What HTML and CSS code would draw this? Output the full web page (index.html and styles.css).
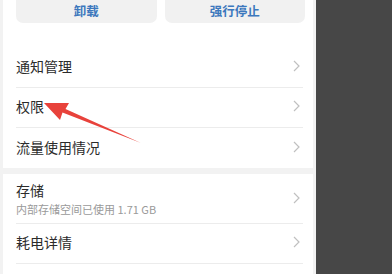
FILE: index.html
```html
<!DOCTYPE html>
<html lang="zh-CN">
<head>
  <meta charset="UTF-8">
  <title>应用信息</title>
  <link rel="stylesheet" href="styles.css">
</head>
<body>
<div class="screen">
  <div class="panel">
    <div class="card top">
      <div class="actions">
        <button class="action">卸载</button>
        <button class="action">强行停止</button>
      </div>
      <div class="row"><span class="title">通知管理</span><svg class="chev" width="7" height="12" viewBox="0 0 7 12"><polyline points="1,1 6,6 1,11"/></svg></div>
      <div class="row"><span class="title">权限</span><svg class="chev" width="7" height="12" viewBox="0 0 7 12"><polyline points="1,1 6,6 1,11"/></svg></div>
      <div class="row last"><span class="title">流量使用情况</span><svg class="chev" width="7" height="12" viewBox="0 0 7 12"><polyline points="1,1 6,6 1,11"/></svg></div>
    </div>
    <div class="card">
      <div class="row tall">
        <div>
          <div class="title">存储</div>
          <div class="sub">内部存储空间已使用 1.71 GB</div>
        </div>
        <svg class="chev" width="7" height="12" viewBox="0 0 7 12"><polyline points="1,1 6,6 1,11"/></svg>
      </div>
      <div class="row"><span class="title">耗电详情</span><svg class="chev" width="7" height="12" viewBox="0 0 7 12"><polyline points="1,1 6,6 1,11"/></svg></div>
      <div class="row"><span class="title">打开方式</span><svg class="chev" width="7" height="12" viewBox="0 0 7 12"><polyline points="1,1 6,6 1,11"/></svg></div>
    </div>
    <svg class="arrow" width="160" height="160" viewBox="0 0 160 160">
      <polygon points="44,103 69,103 65.5,109 141,143 62.5,112.5 60,120" fill="#e8423b"/>
    </svg>
  </div>
  <div class="shade"></div>
</div>
</body>
</html>
```

FILE: styles.css
```css
body { margin: 0; font-family: "Noto Sans CJK SC", "Noto Sans", sans-serif; overflow: hidden; }
.screen { display: flex; height: 274px; overflow: hidden; }
.panel { position: relative; width: 310px; padding: 0 3px; background: #f2f2f2; }
.shade { flex: 1; background: #474747; }

.card { background: #fff; }
.card.top { margin-top: -3px; margin-bottom: 6px; }

.actions { display: flex; gap: 8px; padding: 0 8px 0 13px; margin-bottom: 25px; }
.action {
    flex: 1;
    height: 26px;
    border: none;
    border-radius: 0 0 7px 7px;
    background: #f1f1f1;
    color: #3c78bd;
    font-family: inherit;
    font-size: 12.5px;
    font-weight: bold;
    padding: 0;
}

.row {
    box-sizing: border-box;
    display: flex;
    align-items: center;
    justify-content: space-between;
    height: 40px;
    padding-bottom: 3px;
    margin: 0 10px 0 13px;
    border-bottom: 1px solid #ececec;
}
.row.last { border-bottom: none; }
.row.tall { height: 50px; padding-bottom: 1px; }
.title { font-size: 14px; color: #2b2b2b; }
.sub { font-size: 11px; color: #9a9a9a; margin-top: 1px; }

.chev { margin-right: 3px; fill: none; stroke: #c0c0c0; stroke-width: 1.2; }

.arrow { position: absolute; left: 0; top: 0; }
```
